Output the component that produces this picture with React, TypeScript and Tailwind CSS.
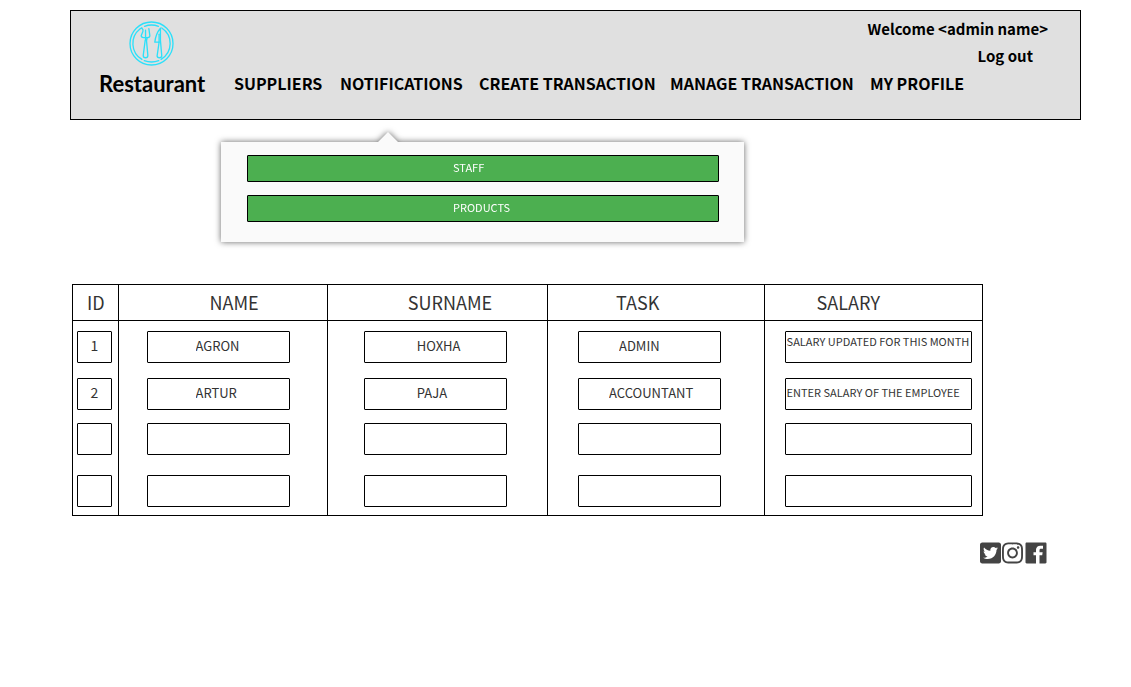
import { FaInstagram, FaTwitterSquare } from "react-icons/fa";
import { IoLogoFacebook } from "react-icons/io";

const navItems = [
  { label: "SUPPLIERS", width: "w-[106px]" },
  { label: "NOTIFICATIONS", width: "w-[139px]" },
  { label: "CREATE TRANSACTION", width: "w-[191px]" },
  { label: "MANAGE TRANSACTION", width: "w-[200px]" },
  { label: "MY PROFILE", width: "w-[100px]" },
];

const columns = [
  { label: "ID", width: "w-[5%]", pad: "pl-[14px]", cell: "pl-1", box: "w-[35px] text-center" },
  { label: "NAME", width: "w-[23%]", pad: "pl-[91px]", cell: "pl-7", box: "w-[143px] pl-12" },
  { label: "SURNAME", width: "w-[24.2%]", pad: "pl-20", cell: "pl-9", box: "w-[143px] pl-13" },
  { label: "TASK", width: "w-[23.8%]", pad: "pl-[68px]", cell: "pl-[30px]", box: "w-[143px]" },
  { label: "SALARY", width: "w-[24%]", pad: "pl-[52px]", cell: "pl-5", box: "w-[187px] pl-px" },
];

const rows = [
  { pad: "pt-[10px]", cells: ["1", "AGRON", "HOXHA", "ADMIN", "SALARY UPDATED FOR THIS MONTH"], task: "pl-10", textPad: "pb-3" },
  { pad: "pt-[15px]", cells: ["2", "ARTUR", "PAJA", "ACCOUNTANT", "ENTER SALARY OF THE EMPLOYEE"], task: "pl-[30px]", textPad: "pb-1" },
  { pad: "pt-[13px]", cells: ["", "", "", "", ""], task: "pl-10", textPad: "pb-1" },
  { pad: "pt-5 pb-2", cells: ["", "", "", "", ""], task: "pl-10", textPad: "pb-1" },
];

const textSizes = ["text-sm", "text-[13px]", "text-[13px]", "text-[13px]", "text-[11px]"];

function PlateIcon() {
  return (
    <svg viewBox="27 16 136 136" className="size-[45px]" fill="none" stroke="#2be0fa" strokeWidth="4" strokeLinecap="round" strokeLinejoin="round" aria-hidden="true">
      <circle cx="95" cy="84" r="65" />
      <path d="M74 32 Q95 24 116 32" />
      <path d="M126 37 A56 56 0 0 1 124 132" />
      <path d="M117 136 Q95 144 73 136" />
      <path d="M66 132 A56 56 0 0 1 60 40 L66 37" />
      <path d="M66 38 Q71 42 69 48 L64 60 Q64 66 71 66 L84 66 Q90 66 90 60 L87 39" />
      <path d="M77 44 V74 M82 66 L80 76 L84 120 Q84 127 77 127 Q70 127 70 120 L76 74" />
      <path d="M122 38 V74 L126 121 Q126 127 119 127 Q112 127 112 121 L118 80 H105 Q108 54 122 38" />
      <path d="M118 80 V56" />
    </svg>
  );
}

export default function App() {
  return (
    <div className="pt-[10px] pr-[50px] pl-[70px] font-['Noto_Sans_CJK_SC','Noto_Sans',sans-serif] text-[#333]">
      <header className="flex border border-black bg-[#e0e0e0] text-black">
        <a href="#home" className="ml-7 flex w-[135px] shrink-0 flex-col pt-[10px]">
          <span className="flex w-[105px] justify-center">
            <PlateIcon />
          </span>
          <span className="font-['Lato',sans-serif] text-[22px] leading-9 font-bold">Restaurant</span>
        </a>
        <div className="flex-1 pt-1 pb-[22px] leading-[27px] font-bold">
          <p className="pr-8 text-right text-[15px]">Welcome &lt;admin name&gt;</p>
          <p className="pr-[47px] text-right text-[15px]">
            <a href="#logout">Log out</a>
          </p>
          <nav className="flex pt-px text-base leading-[27px]">
            {navItems.map((item) => (
              <a key={item.label} href="#nav" className={`${item.width} shrink-0 whitespace-nowrap`}>
                {item.label}
              </a>
            ))}
          </nav>
        </div>
      </header>

      <div className="relative mt-[22px] ml-[151px] flex w-[523px] flex-col gap-[13px] bg-[#fafafa] pt-[13px] pr-[25px] pb-5 pl-[26px] drop-shadow-[0_0_3px_rgba(0,0,0,0.6)]">
        <span className="absolute -top-[10px] left-[157px] h-[10px] w-5 bg-[#fafafa] [clip-path:polygon(50%_0,100%_100%,0_100%)]" />
        <button className="h-[27px] rounded-[1px] border border-black bg-[#4caf50] pb-[3px] pl-[205px] text-left text-[11px] text-white">STAFF</button>
        <button className="h-[27px] rounded-[1px] border border-black bg-[#4caf50] pb-[3px] pl-[205px] text-left text-[11px] text-white">PRODUCTS</button>
      </div>

      <div className="mt-[42px] mr-[98px] ml-[2px]">
        <table className="w-full table-fixed border-collapse border border-black">
          <thead>
            <tr>
              {columns.map((col) => (
                <th key={col.label} className={`${col.width} ${col.pad} h-9 border border-black pt-0 pb-0.5 text-left text-lg leading-6 font-normal`}>
                  {col.label}
                </th>
              ))}
            </tr>
          </thead>
          <tbody>
            {rows.map((row, r) => (
              <tr key={r}>
                {row.cells.map((text, c) => (
                  <td key={c} className={`${columns[c].cell} ${row.pad} border-x border-black align-top`}>
                    <input
                      aria-label={`${columns[c].label} ${r + 1}`}
                      defaultValue={text}
                      className={`${columns[c].box} ${textSizes[c]} ${c === 3 ? row.task : ""} ${c === 4 ? row.textPad : "pb-1"} block h-8 rounded-[1px] border border-black bg-white`}
                    />
                  </td>
                ))}
              </tr>
            ))}
          </tbody>
        </table>
      </div>

      <footer className="mt-[23px] flex items-center justify-end pr-[31px] text-[#444]">
        <div className="-mr-px flex gap-px">
          <a href="#twitter" aria-label="Twitter">
            <FaTwitterSquare className="h-6 w-[21px]" />
          </a>
          <a href="#instagram" aria-label="Instagram">
            <FaInstagram className="h-6 w-[21px]" />
          </a>
        </div>
        <a href="#facebook" aria-label="Facebook">
          <IoLogoFacebook className="size-7" />
        </a>
      </footer>
    </div>
  );
}
